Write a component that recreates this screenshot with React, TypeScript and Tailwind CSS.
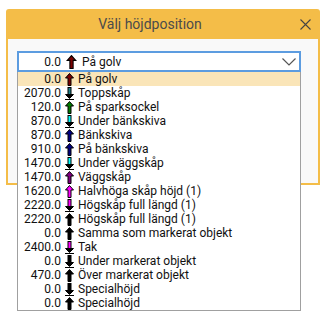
import React from "react";

type Item = { value: string; label: string; dir: "up" | "down"; color: string };

const items: Item[] = [
  { value: "0.0", label: "På golv", dir: "up", color: "#7a0000" },
  { value: "2070.0", label: "Toppskåp", dir: "down", color: "#1d7f86" },
  { value: "120.0", label: "På sparksockel", dir: "up", color: "#007a00" },
  { value: "870.0", label: "Under bänkskiva", dir: "down", color: "#00ffff" },
  { value: "870.0", label: "Bänkskiva", dir: "up", color: "#000080" },
  { value: "910.0", label: "På bänkskiva", dir: "up", color: "#000080" },
  { value: "1470.0", label: "Under väggskåp", dir: "down", color: "#00ffff" },
  { value: "1470.0", label: "Väggskåp", dir: "up", color: "#800080" },
  { value: "1620.0", label: "Halvhöga skåp höjd (1)", dir: "up", color: "#ff00ff" },
  { value: "2220.0", label: "Högskåp full längd (1)", dir: "down", color: "#ff00ff" },
  { value: "2220.0", label: "Högskåp full längd (1)", dir: "up", color: "#000000" },
  { value: "0.0", label: "Samma som markerat objekt", dir: "up", color: "#000000" },
  { value: "2400.0", label: "Tak", dir: "down", color: "#ff00ff" },
  { value: "0.0", label: "Under markerat objekt", dir: "down", color: "#000000" },
  { value: "470.0", label: "Över markerat objekt", dir: "up", color: "#000000" },
  { value: "0.0", label: "Specialhöjd", dir: "down", color: "#000000" },
  { value: "0.0", label: "Specialhöjd", dir: "up", color: "#000000" },
];

function Arrow({ dir, color, big }: { dir: "up" | "down"; color: string; big?: boolean }) {
  const w = big ? 11 : 9;
  const h = big ? 14 : 13;
  if (dir === "up") {
    return (
      <svg width={w} height={h} viewBox="0 0 9 13" className="shrink-0">
        <path d="M4.5 0.5 L8.5 5 L6 5 L6 12.5 L3 12.5 L3 5 L0.5 5 Z" fill={color} stroke="#000" strokeWidth="1" />
      </svg>
    );
  }
  return (
    <svg width={w} height={h} viewBox="0 0 9 13" className="shrink-0">
      <rect x="3" y="0.5" width="3" height="7" fill={color} stroke="#000" strokeWidth="1" />
      <path d="M0.5 7.5 L8.5 7.5 L4.5 11.5 Z" fill="#000" stroke="#000" strokeWidth="1" />
      <rect x="0" y="12" width="9" height="1" fill="#000" />
    </svg>
  );
}

function Row({ it, active }: { it: Item; active: boolean }) {
  return (
    <div className={`h-[14px] flex items-center leading-none ${active ? "bg-[#fae5b8]" : ""}`}>
      <span className="w-[43px] text-right">{it.value}</span>
      <span className="ml-[4px] flex items-center">
        <Arrow dir={it.dir} color={it.color} />
      </span>
      <span className="ml-[4px] whitespace-nowrap">{it.label}</span>
    </div>
  );
}

export default function App() {
  return (
    <div className="w-[330px] h-[319px] bg-white pt-[9px] pl-[6px] font-['Roboto',sans-serif]">
      <div className="w-[314px]">
        <div className="h-[30px] bg-[#f4bd48] rounded-t-[3px] flex items-center">
          <div className="flex-1 text-center text-[14px] text-[#4b4b4b] pl-[2px]">Välj höjdposition</div>
          <div className="w-[28px] flex justify-center pr-[2px]">
            <svg width="11" height="11" viewBox="0 0 11 11">
              <path d="M0.5 0.5 L10.5 10.5 M10.5 0.5 L0.5 10.5" stroke="#444" strokeWidth="1.1" />
            </svg>
          </div>
        </div>
        <div className="h-[146px] bg-[#f9f9f9] border-2 border-t-0 border-[#f4bd48] pt-[12px] pl-[9px]">
          <div className="relative w-[284px] text-[12px] text-[#111]">
            <div className="h-[21px] bg-white border-2 border-[#5c9ce0] flex items-center">
              <span className="w-[42px] text-right">0.0</span>
              <span className="ml-[5px] flex items-center">
                <Arrow dir="up" color="#7a0000" big />
              </span>
              <span className="ml-[5px]">På golv</span>
              <span className="ml-auto mr-[3px] flex">
                <svg width="14" height="8" viewBox="0 0 14 8">
                  <path d="M0.5 0.5 L7 7 L13.5 0.5" fill="none" stroke="#555" strokeWidth="1.2" />
                </svg>
              </span>
            </div>
            <div className="absolute left-0 top-[21px] w-[284px] bg-white border border-t-0 border-[#a0a0a0] z-10">
              {items.map((it, i) => (
                <Row key={i} it={it} active={i === 0} />
              ))}
            </div>
          </div>
        </div>
      </div>
    </div>
  );
}
